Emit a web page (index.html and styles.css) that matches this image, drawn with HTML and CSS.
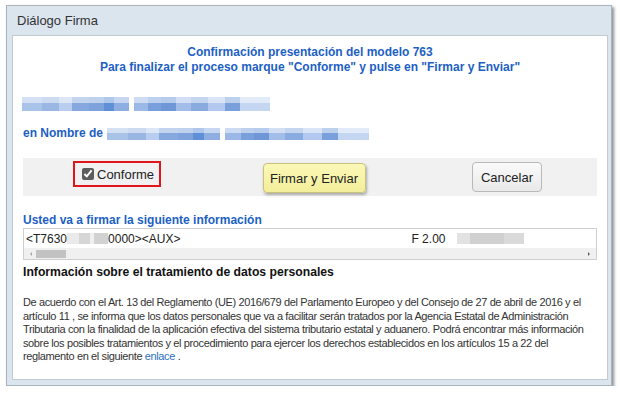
FILE: index.html
```html
<!DOCTYPE html>
<html lang="es">
<head>
    <meta charset="UTF-8">
    <title>Diálogo Firma</title>
    <link rel="stylesheet" href="styles.css">
</head>
<body>
    <div class="page">
        <div class="dialog">
            <div class="dialog-title">Diálogo Firma</div>
            <div class="dialog-body">
                <h1 class="heading">Confirmación presentación del modelo 763<br>Para finalizar el proceso marque "Conforme" y pulse en "Firmar y Enviar"</h1>

                <div class="mask mask-name"></div>

                <div class="on-behalf">
                    <span>en Nombre de</span>
                    <span class="mask mask-behalf"></span>
                </div>

                <!-- Botones -->
                <div class="actions">
                    <div class="cell">
                        <label class="agree"><input type="checkbox" checked> Conforme</label>
                    </div>
                    <div class="cell">
                        <button class="btn btn-sign">Firmar y Enviar</button>
                    </div>
                    <div class="cell">
                        <button class="btn btn-cancel">Cancelar</button>
                    </div>
                </div>

                <h2 class="sign-title">Usted va a firmar la siguiente información</h2>
                <div class="sign-data">
                    <div class="sign-line">
                        <span>&lt;T7630</span><span class="grey-mask gm1"></span><span>0000&gt;&lt;AUX&gt;</span>
                        <span class="amount">F 2.00</span><span class="grey-mask gm2"></span>
                    </div>
                    <div class="hscroll">
                        <span class="arrow arrow-left"></span>
                        <span class="thumb"></span>
                        <span class="arrow arrow-right"></span>
                    </div>
                </div>

                <h3 class="privacy-title">Información sobre el tratamiento de datos personales</h3>
                <p class="privacy-text">De acuerdo con el Art. 13 del Reglamento (UE) 2016/679 del Parlamento Europeo y del Consejo de 27 de abril de 2016 y el<br>
                    artículo 11 , se informa que los datos personales que va a facilitar serán tratados por la Agencia Estatal de Administración<br>
                    Tributaria con la finalidad de la aplicación efectiva del sistema tributario estatal y aduanero. Podrá encontrar más información<br>
                    sobre los posibles tratamientos y el procedimiento para ejercer los derechos establecidos en los artículos 15 a 22 del<br>
                    reglamento en el siguiente <a href="#">enlace</a> .</p>
            </div>
        </div>
    </div>
</body>
</html>
```

FILE: styles.css
```css
body {
    margin: 0;
    background: #ffffff;
    font-family: "Liberation Sans", Arial, sans-serif;
    color: #222;
}
.page {
    padding: 5px 0 0 6px;
}
.dialog {
    width: 606px;
    height: 381px;
    box-sizing: border-box;
    border: 1px solid #aab4be;
    background: #dbe5ee;
    box-shadow: 2px 2px 3px rgba(0, 0, 0, 0.45);
    padding: 0 3px 5px 5px;
    display: flex;
    flex-direction: column;
}
.dialog-title {
    height: 29px;
    line-height: 29px;
    font-size: 13px;
    color: #333;
    padding-left: 5px;
}
.dialog-body {
    flex: 1;
    background: #fff;
    border: 1px solid #c3ccd5;
    padding: 9px 10px 0 10px;
}
.heading {
    margin: 0;
    text-align: center;
    font-size: 12px;
    line-height: 15px;
    color: #1d5fc4;
}
.mask {
    display: block;
    height: 14px;
    background:
        linear-gradient(to bottom, rgba(255, 255, 255, 0.5) 45%, rgba(255, 255, 255, 0) 45%),
        linear-gradient(to right,
            #a9c2e8 0, #a9c2e8 8%, #9ab6e3 8%, #9ab6e3 15%, #b9cdee 15%, #b9cdee 20%,
            #86a8de 20%, #86a8de 27%, #7ea3dc 27%, #7ea3dc 33%, #5f8fd6 33%, #5f8fd6 37%,
            #8eaee2 37%, #8eaee2 43%, #ffffff 43%, #ffffff 45%, #9bb8e6 45%, #9bb8e6 51%,
            #7aa0dc 51%, #7aa0dc 56%, #6f97d8 56%, #6f97d8 62%, #a3bde9 62%, #a3bde9 68%,
            #8aabe0 68%, #8aabe0 75%, #b2c8ee 75%, #b2c8ee 82%, #7aa0dc 82%, #7aa0dc 88%,
            #c5d6f2 88%, #c5d6f2 100%);
}
.mask-name {
    width: 248px;
    margin: 22px 0 0 -1px;
}
.on-behalf {
    margin-top: 15px;
    display: flex;
    align-items: center;
    gap: 4px;
    font-size: 12px;
    font-weight: bold;
    line-height: 15px;
    color: #1d5fc4;
}
.mask-behalf {
    width: 262px;
    height: 12px;
}
.actions {
    margin-top: 17px;
    height: 38px;
    background: #f1f1f1;
    display: grid;
    grid-template-columns: 188px 206px 180px;
    align-items: center;
}
.cell {
    display: flex;
    justify-content: center;
}
.agree {
    display: flex;
    align-items: center;
    width: 88px;
    height: 26px;
    box-sizing: border-box;
    border: 2px solid #e0161b;
    padding-left: 7px;
    font-size: 13px;
    color: #222;
    margin-top: -6px;
}
.agree input {
    margin: 0 3px 0 0;
    width: 12px;
    height: 12px;
    accent-color: #5c5c5c;
}
.btn {
    font-family: "Liberation Sans", Arial, sans-serif;
    font-size: 13px;
    color: #222;
    height: 30px;
    border-radius: 4px;
    cursor: pointer;
}
.btn-sign {
    width: 103px;
    background: linear-gradient(#fbf8b8, #f3ee9a);
    border: 1px solid #c9c27c;
    box-shadow: 1px 2px 3px rgba(0, 0, 0, 0.3);
    margin-top: 2px;
}
.btn-cancel {
    width: 70px;
    background: linear-gradient(#fafafa, #e9e9e9);
    border: 1px solid #b9b9b9;
}
.sign-title {
    margin: 17px 0 0 0;
    font-size: 12px;
    line-height: 14px;
    color: #1d5fc4;
}
.sign-data {
    margin-top: 1px;
    border: 1px solid #cfcfcf;
    height: 30px;
    display: flex;
    flex-direction: column;
}
.sign-line {
    flex: 1;
    display: flex;
    align-items: center;
    font-size: 12px;
    padding-left: 2px;
    color: #222;
}
.grey-mask {
    height: 11px;
    background: linear-gradient(to right, #eaeaea 0, #eaeaea 30%, #d6d6d6 30%, #d6d6d6 55%, #f0f0f0 55%, #f0f0f0 65%, #d2d2d2 65%, #d2d2d2 100%);
}
.gm1 {
    width: 41px;
}
.amount {
    margin-left: 231px;
}
.gm2 {
    width: 67px;
    margin-left: 12px;
    background: linear-gradient(to right, #e2e2e2 0, #e2e2e2 20%, #d0d0d0 20%, #d0d0d0 70%, #dadada 70%, #dadada 100%);
}
.hscroll {
    height: 11px;
    background: #f0f0f0;
    display: flex;
    align-items: center;
}
.thumb {
    width: 30px;
    height: 8px;
    background: #c2c2c2;
    margin-left: 4px;
}
.arrow {
    width: 0;
    height: 0;
    border-top: 2px solid transparent;
    border-bottom: 2px solid transparent;
}
.arrow-left {
    border-right: 2px solid #a8a8a8;
    margin-left: 6px;
}
.arrow-right {
    border-left: 2px solid #606060;
    margin-left: auto;
    margin-right: 6px;
}
.privacy-title {
    margin: 4px 0 0 0;
    font-size: 12.2px;
    line-height: 16px;
    color: #111;
}
.privacy-text {
    margin: 16px 0 0 0;
    font-size: 11px;
    letter-spacing: -0.38px;
    line-height: 13.5px;
    color: #333;
    white-space: nowrap;
}
.privacy-text a {
    color: #2d6fc0;
    text-decoration: none;
}
```
